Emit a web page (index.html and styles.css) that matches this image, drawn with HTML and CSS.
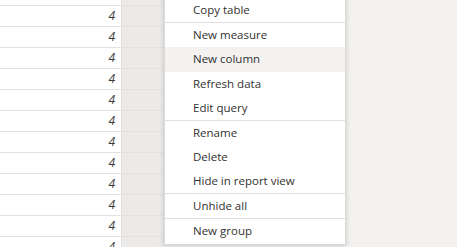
FILE: index.html
```html
<!DOCTYPE html>
<html lang="en">

<head>
    <meta charset="UTF-8">
    <title>Table view</title>
    <link rel="stylesheet" href="styles.css">
</head>

<body>
    <div class="view">
        <div class="table">
            <div class="cell first"></div>
            <div class="cell">4</div>
            <div class="cell">4</div>
            <div class="cell">4</div>
            <div class="cell">4</div>
            <div class="cell">4</div>
            <div class="cell">4</div>
            <div class="cell">4</div>
            <div class="cell">4</div>
            <div class="cell">4</div>
            <div class="cell">4</div>
            <div class="cell">4</div>
            <div class="cell">4</div>
        </div>
        <div class="gutter">
            <div class="gutter-row first"></div>
            <div class="gutter-row"></div>
            <div class="gutter-row"></div>
            <div class="gutter-row"></div>
            <div class="gutter-row"></div>
            <div class="gutter-row"></div>
            <div class="gutter-row"></div>
            <div class="gutter-row"></div>
            <div class="gutter-row"></div>
            <div class="gutter-row"></div>
            <div class="gutter-row"></div>
            <div class="gutter-row"></div>
            <div class="gutter-row"></div>
        </div>
        <div class="canvas"></div>

        <ul class="context-menu">
            <li class="item">Copy table</li>
            <li class="sep"></li>
            <li class="item">New measure</li>
            <li class="item hover">New column</li>
            <li class="item">Refresh data</li>
            <li class="item">Edit query</li>
            <li class="sep"></li>
            <li class="item">Rename</li>
            <li class="item">Delete</li>
            <li class="item">Hide in report view</li>
            <li class="sep"></li>
            <li class="item">Unhide all</li>
            <li class="sep"></li>
            <li class="item">New group</li>
        </ul>
    </div>
</body>

</html>
```

FILE: styles.css
```css
* {
    margin: 0;
    padding: 0;
    box-sizing: border-box;
}

body {
    font-family: "Open Sans", sans-serif;
    background-color: #f3f2f1;
    color: #323130;
    overflow: hidden;
}

.view {
    position: relative;
    display: flex;
    height: 247px;
    overflow: hidden;
}

.table {
    width: 122px;
    background-color: #fff;
    border-right: 1px solid #e1dfdd;
}

.cell {
    height: 21px;
    border-bottom: 1px solid #e1e1e1;
    text-align: right;
    padding-right: 6px;
    font-size: 12px;
    font-style: italic;
    line-height: 20px;
    color: #3b3a39;
}

.cell.first,
.gutter-row.first {
    height: 6px;
}

.gutter {
    width: 43px;
    background-color: #ebeae8;
}

.gutter-row {
    height: 21px;
    border-bottom: 1px solid #e4e2e0;
}

.canvas {
    flex: 1;
}

.context-menu {
    position: absolute;
    left: 164px;
    top: -7px;
    width: 182px;
    list-style: none;
    background-color: #fff;
    border: 1px solid #dcdad8;
    padding: 4px 0 1px;
    box-shadow: 0 1px 5px rgba(0, 0, 0, 0.18);
    font-size: 11.5px;
}

.context-menu .item {
    height: 24px;
    line-height: 24px;
    padding-left: 28px;
    white-space: nowrap;
}

.context-menu .item.hover {
    height: 25px;
    background-color: #f3f2f1;
}

.context-menu .sep {
    height: 1px;
    background-color: #e1dfdd;
}
```
